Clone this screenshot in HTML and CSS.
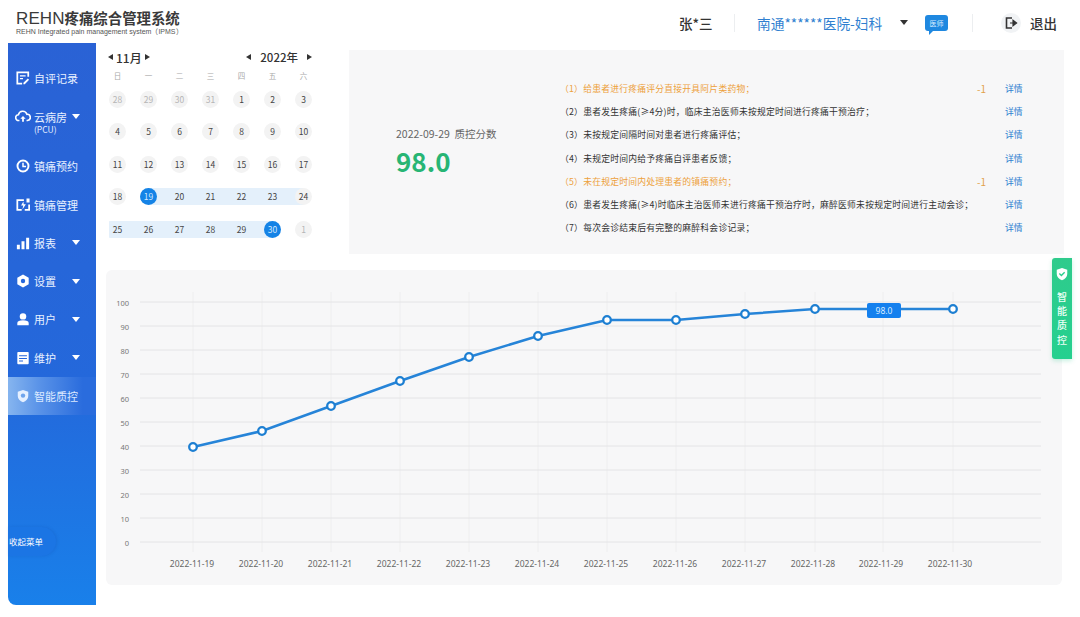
FILE: index.html
```html
<!DOCTYPE html>
<html lang="zh-CN">
<head>
<meta charset="utf-8">
<title>REHN疼痛综合管理系统</title>
<link rel="stylesheet" href="styles.css">
</head>
<body>
<div class="app">
  <header class="topbar">
    <div class="logo">
      <div class="logo-title"><span class="logo-latin">REHN</span>疼痛综合管理系统</div>
      <div class="logo-sub">REHN Integrated pain management system（IPMS）</div>
    </div>
    <div class="top-right">
      <span class="user">张*三</span>
      <i class="vsep"></i>
      <span class="hospital">南通******医院-妇科</span>
      <i class="caret-down dark hospital-caret"></i>
      <span class="badge">医师</span>
      <i class="vsep sep2"></i>
      <span class="exit-icon"><svg width="14" height="14" viewBox="0 0 14 14"><path d="M8 2H2.500v10H8" fill="none" stroke="#333" stroke-width="1.600"/><path d="M6 7h4M9 4.200 12.600 7 9 9.800z" fill="#333" stroke="#333" stroke-width="1.200"/></svg></span>
      <span class="exit">退出</span>
    </div>
  </header>
  <div class="body-row">
    <nav class="sidebar">
      <div class="nav-item"><svg class="nav-icon" viewBox="0 0 16 16"><path d="M14 6.500V1.500H1.500v13H7" fill="none" stroke="#fff" stroke-width="2"/><path d="M4.500 5.500h6.500M4.500 8.800h3.500" stroke="#fff" stroke-width="1.500"/><path d="M8.500 13.500l5-5 1.500 1.500-5 5H8.500z" fill="#fff"/></svg><span>自评记录</span></div>
      <div class="nav-item tall"><svg class="nav-icon cloud" viewBox="0 0 18 16"><path d="M5 12.500H4.200a3.200 3.200 0 0 1-.4-6.400 5 5 0 0 1 9.600-.6 3.500 3.500 0 0 1 .6 7H13" fill="none" stroke="#fff" stroke-width="1.800"/><path d="M9 7.500l3 3H10v3.500H8v-3.500H6z" fill="#fff"/></svg><div class="nav-two"><span>云病房</span><small>(PCU)</small></div><i class="caret-down pcu-caret"></i></div>
      <div class="nav-item"><svg class="nav-icon" viewBox="0 0 16 16"><circle cx="8" cy="8" r="6.300" fill="none" stroke="#fff" stroke-width="2.200"/><path d="M8 4.200V8.500h3.500" fill="none" stroke="#fff" stroke-width="1.700"/></svg><span>镇痛预约</span></div>
      <div class="nav-item"><svg class="nav-icon" viewBox="0 0 16 16"><path d="M9 2.500H1.500v11h5M15 7.500v6H10" fill="none" stroke="#fff" stroke-width="2"/><path d="M8.500 4 5.800 8.500h2.500L7.300 13l4-6H8.800zM12 .500h3.500V5H12z" fill="#fff"/></svg><span>镇痛管理</span></div>
      <div class="nav-item"><svg class="nav-icon" viewBox="0 0 16 16"><path d="M1 10h3.400v5H1zM6.300 6h3.400v9H6.300zM11.600 2H15v13h-3.400z" fill="#fff"/></svg><span>报表</span><i class="caret-down"></i></div>
      <div class="nav-item"><svg class="nav-icon" viewBox="0 0 16 16"><path d="M8 .500l6.500 3.700v7.600L8 15.500l-6.500-3.700V4.200z" fill="#fff"/><circle cx="8" cy="8" r="2.500" fill="#2567dc"/></svg><span>设置</span><i class="caret-down"></i></div>
      <div class="nav-item"><svg class="nav-icon" viewBox="0 0 16 16"><circle cx="8" cy="5" r="3.700" fill="#fff"/><path d="M1.500 15v-2.500C1.500 10.500 4 9.500 8 9.500s6.500 1 6.500 3V15z" fill="#fff"/></svg><span>用户</span><i class="caret-down"></i></div>
      <div class="nav-item"><svg class="nav-icon" viewBox="0 0 16 16"><path d="M2.500 1h11a1 1 0 0 1 1 1v12a1 1 0 0 1-1 1h-11a1 1 0 0 1-1-1V2a1 1 0 0 1 1-1z" fill="#fff"/><path d="M3.500 5.500h9M3.500 8.500h9M3.500 11.500h4.500" stroke="#2567dc" stroke-width="1.200"/></svg><span>维护</span><i class="caret-down"></i></div>
      <div class="nav-item active"><svg class="nav-icon" viewBox="0 0 16 16"><path d="M8 1l6 2v5c0 3.500-2.500 5.800-6 7-3.500-1.200-6-3.500-6-7V3z" fill="#e6f0ff"/><circle cx="8" cy="7.500" r="2.500" fill="#6fa4ec"/></svg><span>智能质控</span></div>
      <div class="collapse">收起菜单</div>
    </nav>
    <main class="main">
      <section class="top-row">
        <div class="calendar">
          <div class="cal-head">
            <div class="cal-month"><i class="tri-l"></i><span>11月</span><i class="tri-r"></i></div>
            <div class="cal-year"><i class="tri-l"></i><span>2022年</span><i class="tri-r"></i></div>
          </div>
          <div class="weekdays"><span>日</span><span>一</span><span>二</span><span>三</span><span>四</span><span>五</span><span>六</span></div>
          <div class="days">
            <div class="cell"><span class="day off">28</span></div><div class="cell"><span class="day off">29</span></div><div class="cell"><span class="day off">30</span></div><div class="cell"><span class="day off">31</span></div><div class="cell"><span class="day">1</span></div><div class="cell"><span class="day">2</span></div><div class="cell"><span class="day">3</span></div>
            <div class="cell"><span class="day">4</span></div><div class="cell"><span class="day">5</span></div><div class="cell"><span class="day">6</span></div><div class="cell"><span class="day">7</span></div><div class="cell"><span class="day">8</span></div><div class="cell"><span class="day">9</span></div><div class="cell"><span class="day">10</span></div>
            <div class="cell"><span class="day">11</span></div><div class="cell"><span class="day">12</span></div><div class="cell"><span class="day">13</span></div><div class="cell"><span class="day">14</span></div><div class="cell"><span class="day">15</span></div><div class="cell"><span class="day">16</span></div><div class="cell"><span class="day">17</span></div>
            <div class="cell"><span class="day">18</span></div><div class="cell r-start"><span class="day sel">19</span></div><div class="cell r"><span class="day">20</span></div><div class="cell r"><span class="day">21</span></div><div class="cell r"><span class="day">22</span></div><div class="cell r"><span class="day">23</span></div><div class="cell r-last"><span class="day">24</span></div>
            <div class="cell r-first"><span class="day">25</span></div><div class="cell r"><span class="day">26</span></div><div class="cell r"><span class="day">27</span></div><div class="cell r"><span class="day">28</span></div><div class="cell r"><span class="day">29</span></div><div class="cell r-end"><span class="day sel">30</span></div><div class="cell"><span class="day off">1</span></div>
          </div>
        </div>
        <div class="qc-panel">
          <div class="score">
            <div class="score-label">2022-09-29&nbsp; 质控分数</div>
            <div class="score-value">98.0</div>
          </div>
          <ul class="rules">
            <li class="warn"><span class="rule-text">（1）给患者进行疼痛评分直接开具阿片类药物；</span><span class="delta">-1</span><a class="detail">详情</a></li>
            <li><span class="rule-text">（2）患者发生疼痛(≥4分)时，临床主治医师未按规定时间进行疼痛干预治疗；</span><span class="delta"></span><a class="detail">详情</a></li>
            <li><span class="rule-text">（3）未按规定间隔时间对患者进行疼痛评估；</span><span class="delta"></span><a class="detail">详情</a></li>
            <li><span class="rule-text">（4）未规定时间内给予疼痛自评患者反馈；</span><span class="delta"></span><a class="detail">详情</a></li>
            <li class="warn"><span class="rule-text">（5）未在规定时间内处理患者的镇痛预约；</span><span class="delta">-1</span><a class="detail">详情</a></li>
            <li><span class="rule-text">（6）患者发生疼痛(≥4)时临床主治医师未进行疼痛干预治疗时，麻醉医师未按规定时间进行主动会诊；</span><span class="delta"></span><a class="detail">详情</a></li>
            <li><span class="rule-text">（7）每次会诊结束后有完整的麻醉科会诊记录；</span><span class="delta"></span><a class="detail">详情</a></li>
          </ul>
        </div>
      </section>
      <section class="chart-card">
        <svg class="chart" viewBox="106 270 956 315" width="956" height="315">
          <g class="vgrid">
            <path d="M193 292V552M262 292V552M331 292V552M400 292V552M469 292V552M538 292V552M607 292V552M676 292V552M745 292V552M815 292V552M883 292V552M953 292V552"/>
          </g>
          <g class="hgrid">
            <path d="M140 302H1041M140 326H1041M140 350H1041M140 374H1041M140 398H1041M140 422H1041M140 446H1041M140 470H1041M140 494H1041M140 518H1041M140 542H1041"/>
          </g>
          <g class="ylabels">
            <text x="129" y="306">100</text><text x="129" y="330">90</text><text x="129" y="354">80</text><text x="129" y="378">70</text><text x="129" y="402">60</text><text x="129" y="426">50</text><text x="129" y="450">40</text><text x="129" y="474">30</text><text x="129" y="498">20</text><text x="129" y="522">10</text><text x="129" y="546">0</text>
          </g>
          <g class="xlabels">
            <text x="192" y="567">2022-11-19</text><text x="261" y="567">2022-11-20</text><text x="330" y="567">2022-11-21</text><text x="399" y="567">2022-11-22</text><text x="468" y="567">2022-11-23</text><text x="537" y="567">2022-11-24</text><text x="606" y="567">2022-11-25</text><text x="675" y="567">2022-11-26</text><text x="744" y="567">2022-11-27</text><text x="813" y="567">2022-11-28</text><text x="881" y="567">2022-11-29</text><text x="950" y="567">2022-11-30</text>
          </g>
          <polyline class="line" points="193,447 262,431 331,406 400,381 469,357 538,336 607,320 676,320 745,314 815,309 883,309 953,309"/>
          <g class="points">
            <circle cx="193" cy="447" r="3.800"/><circle cx="262" cy="431" r="3.800"/><circle cx="331" cy="406" r="3.800"/><circle cx="400" cy="381" r="3.800"/><circle cx="469" cy="357" r="3.800"/><circle cx="538" cy="336" r="3.800"/><circle cx="607" cy="320" r="3.800"/><circle cx="676" cy="320" r="3.800"/><circle cx="745" cy="314" r="3.800"/><circle cx="815" cy="309" r="3.800"/><circle cx="953" cy="309" r="3.800"/>
          </g>
          <rect class="tip" x="867" y="303" width="34" height="15" rx="2"/>
          <text class="tip-text" x="884" y="314">98.0</text>
        </svg>
      </section>
    </main>
  </div>
  <aside class="qc-tab">
    <svg class="qc-shield" viewBox="0 0 16 16" width="14" height="14"><path d="M8 1l6 2v5c0 3.500-2.500 5.800-6 7-3.500-1.200-6-3.500-6-7V3z" fill="#fff"/><path d="M5 7.500l2.300 2.300L11 6" fill="none" stroke="#2ccf8e" stroke-width="1.500"/></svg>
    <span>智</span><span>能</span><span>质</span><span>控</span>
  </aside>
</div>
</body>
</html>
```
FILE: styles.css
```css
* { box-sizing: border-box; }
html, body { margin: 0; padding: 0; }
body {
  background: #fff;
  font-family: "Noto Sans CJK SC", "Noto Sans", sans-serif;
  color: #333;
  overflow: hidden;
}
.app { position: relative; width: 1080px; height: 617px; display: flex; flex-direction: column; }

/* top bar */
.topbar { height: 43px; display: flex; align-items: center; justify-content: space-between; padding-left: 16px; flex: none; }
.logo { display: flex; flex-direction: column; margin-top: 2px; }
.logo-title { font-family: "Noto Sans CJK SC", sans-serif; font-size: 14.400px; line-height: 18px; font-weight: 700; color: #3a3a3a; white-space: nowrap; }
.logo-latin { font-family: "Liberation Sans", sans-serif; font-weight: 400; font-size: 17px; letter-spacing: .1px; }
.logo-sub { font-family: "Liberation Sans", sans-serif; font-size: 7px; line-height: 8px; color: #555; white-space: nowrap; }
.top-right { display: flex; align-items: center; height: 100%; margin-top: 2px; }
.user { font-size: 13.500px; font-weight: 500; color: #333; width: 55px; }
.vsep { width: 1px; height: 18px; background: #eceef0; margin-right: 22px; }
.hospital { font-size: 13.700px; color: #2f7fd0; width: 128px; white-space: nowrap; }
.hospital-caret { margin-left: 15px; }
.badge { margin-left: 17px; width: 23px; height: 16px; border-radius: 3px; background: #1f88e0; color: #d8ecff; font-size: 7px; line-height: 16px; text-align: center; position: relative; }
.badge::after { content: ""; position: absolute; left: 4px; bottom: -4px; border-left: 4px solid #1f88e0; border-bottom: 4px solid transparent; }
.sep2 { margin-left: 24px; margin-right: 28px; }
.exit-icon { width: 20px; height: 20px; border-radius: 50%; background: #f1f3f5; display: flex; align-items: center; justify-content: center; }
.exit { font-size: 13.500px; font-weight: 500; color: #333; margin-left: 9px; margin-right: 23px; }

.caret-down { display: block; margin-left: auto; width: 0; height: 0; border-left: 4px solid transparent; border-right: 4px solid transparent; border-top: 5.500px solid #fff; flex: none; }
.caret-down.dark { margin-left: 15px; border-top-color: #333; }

/* sidebar */
.body-row { flex: 1; display: flex; align-items: flex-start; min-height: 0; }
.sidebar {
  width: 88px; height: 562px; margin-left: 8px; flex: none;
  background: linear-gradient(180deg, #2a62d5 0%, #2468db 60%, #1980ea 100%);
  border-bottom-left-radius: 8px;
  padding-top: 16px; display: flex; flex-direction: column; color: #eaf2ff;
}
.nav-item { height: 38.250px; padding: 0 16px 0 8px; display: flex; align-items: center; font-size: 11px; flex: none; color: #e8f1ff; }
.nav-item.tall { height: 50px; padding-left: 7px; padding-right: 16px; }
.nav-icon { width: 14px; height: 14px; flex: none; margin-right: 4px; }
.nav-icon.cloud { width: 16px; height: 15px; margin-right: 3px; margin-top: -12px; }
.nav-two { display: flex; flex-direction: column; line-height: 14px; }
.nav-two small { font-size: 8.500px; line-height: 11px; }
.pcu-caret { margin-top: -12px; }
.nav-item.active { background: linear-gradient(90deg, #86b5ef 0%, #5a93e8 35%, #2a6cdd 85%); color: #dbe9ff; }
.collapse {
  margin-top: auto; margin-bottom: 49px; width: 48px; height: 29px;
  background: #1b75e4; border-radius: 0 15px 15px 0;
  font-size: 8.500px; line-height: 29px; padding-left: 1px; color: #fff; white-space: nowrap;
  box-shadow: 1px 0 3px rgba(20, 80, 180, .25);
}

/* main */
.main { flex: 1; padding: 7px 0 0 6px; min-width: 0; }
.top-row { display: flex; align-items: flex-start; }
.calendar { width: 247px; flex: none; }
.cal-head { height: 14px; width: 210px; display: flex; justify-content: space-between; align-items: center; font-size: 11.500px; font-weight: 500; color: #333; }
.cal-month { display: flex; align-items: center; gap: 3px; margin-left: 6px; }
.cal-month span { font-size: 12px; }
.cal-year { display: flex; align-items: center; gap: 9px; }
.tri-l, .tri-r { display: block; width: 0; height: 0; border-top: 3.500px solid transparent; border-bottom: 3.500px solid transparent; }
.tri-l { border-right: 5px solid #333; }
.tri-r { border-left: 5px solid #333; }
.weekdays { display: grid; grid-template-columns: repeat(7, 31px); margin-top: 6px; height: 12px; font-size: 7.500px; line-height: 12px; text-align: center; color: #aaa; }
.days { display: grid; grid-template-columns: repeat(7, 31px); grid-auto-rows: 17px; row-gap: 15.500px; margin-top: 8.500px; }
.cell { display: flex; align-items: center; justify-content: center; height: 17px; }
.day { width: 17px; height: 17px; border-radius: 50%; background: #f3f3f3; font-size: 8.500px; line-height: 17px; text-align: center; color: #444; }
.day.off { color: #b5b5b5; }
.r { background: #e4f0fb; }
.r .day, .r-first .day { background: transparent; }
.r-start { background: linear-gradient(90deg, transparent 50%, #e4f0fb 50%); }
.r-end { background: linear-gradient(90deg, #e4f0fb 50%, transparent 50%); }
.r-first { background: linear-gradient(90deg, transparent 22%, #e4f0fb 22%); border-radius: 9px 0 0 9px; }
.r-last { background: linear-gradient(90deg, #e4f0fb 50%, transparent 50%); }
.day.sel { background: #1583e6; color: #d4e9ff; }

/* quality panel */
.qc-panel { width: 715px; height: 204px; background: #f7f7f8; display: flex; flex: none; }
.score { width: 216px; padding: 77px 0 0 47px; flex: none; }
.score-label { font-size: 10.500px; line-height: 14px; color: #666; white-space: nowrap; }
.score-value { font-size: 26px; line-height: 36px; font-weight: 700; color: #27b574; margin-top: 2px; }
.rules { list-style: none; margin: 0; padding: 27px 0 0; flex: 1; }
.rules li { height: 23.200px; display: flex; align-items: center; font-size: 8.800px; color: #333; white-space: nowrap; }
.rule-text { width: 397px; margin-left: -5px; letter-spacing: .22px; }
.rules li.warn { color: #eda13c; }
.delta { width: 29px; font-size: 10px; color: #e2a04a; text-align: right; }
.detail { margin-left: 19px; font-size: 8.800px; color: #2f7fd0; }

/* chart */
.chart-card { margin: 16px 0 0 4px; width: 956px; height: 315px; background: #f7f7f8; border-radius: 6px; }
.chart { display: block; }
.vgrid path { stroke: #eeeeef; stroke-width: 1; fill: none; }
.hgrid path { stroke: #e4e4e6; stroke-width: 1; fill: none; }
.ylabels text { font-family: "Noto Sans", sans-serif; font-size: 7.500px; fill: #777; text-anchor: end; }
.xlabels text { font-family: "Noto Sans", sans-serif; font-size: 8.500px; fill: #666; text-anchor: middle; }
.line { fill: none; stroke: #2684d8; stroke-width: 2.500; }
.points circle { fill: #fff; stroke: #1d7fd2; stroke-width: 2.300; }
.tip { fill: #1480ee; }
.tip-text { font-family: "Noto Sans", sans-serif; font-size: 8.500px; fill: #d8ecff; text-anchor: middle; }

/* right tab */
.qc-tab {
  position: absolute; left: 1052px; top: 258px; width: 20px; height: 101px;
  background: linear-gradient(180deg, #2fcb8c, #25d08f);
  border-radius: 3px 0 0 3px; box-shadow: 0 2px 4px rgba(40, 200, 140, .25);
  display: flex; flex-direction: column; align-items: center; color: #eafff5;
  font-size: 10px; font-weight: 500; line-height: 14.200px; padding-top: 9px;
}
.qc-shield { margin-bottom: 9px; flex: none; }
```
